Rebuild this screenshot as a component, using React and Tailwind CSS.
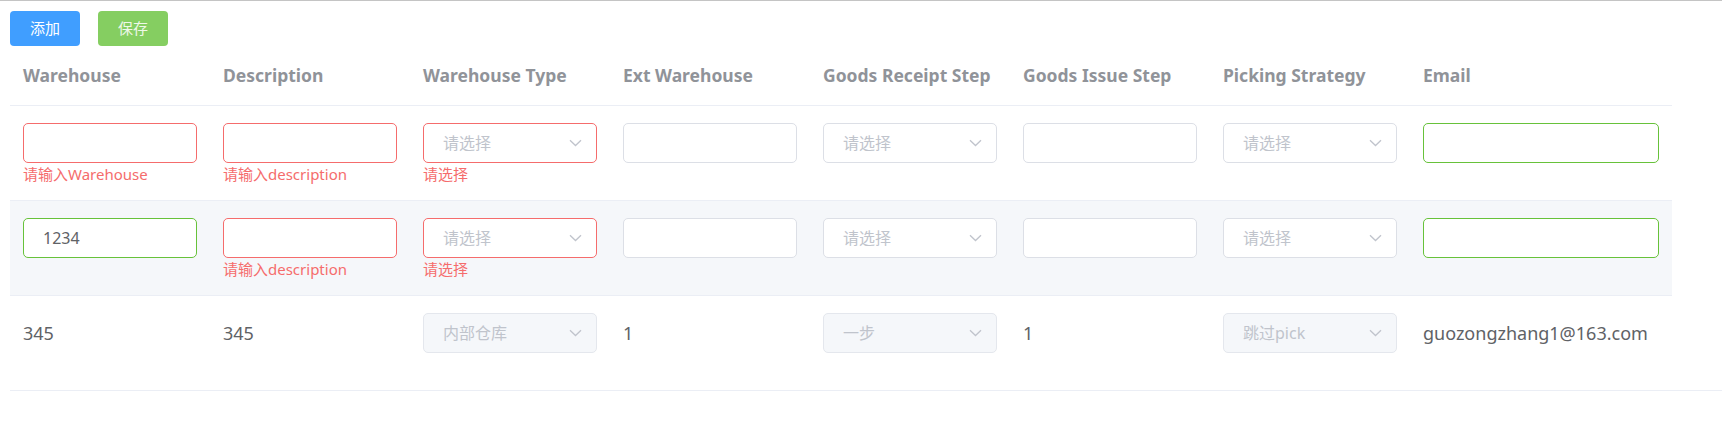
import React from 'react';

const columns = [
  'Warehouse',
  'Description',
  'Warehouse Type',
  'Ext Warehouse',
  'Goods Receipt Step',
  'Goods Issue Step',
  'Picking Strategy',
  'Email',
];

const gridCols = 'grid grid-cols-[200px_200px_200px_200px_200px_200px_200px_262px] w-[1662px]';

const borderByState = {
  error: 'border-[#f56c6c]',
  success: 'border-[#67c23a]',
  normal: 'border-[#dcdfe6]',
};

const Chevron = () => (
  <svg width="13" height="8" viewBox="0 0 13 8" fill="none" className="shrink-0">
    <path d="M1 1.2 L6.5 6.5 L12 1.2" stroke="#c0c4cc" strokeWidth="1.3" />
  </svg>
);

const TextInput = ({ state = 'normal', value }) => (
  <div
    className={`h-[40px] w-full rounded-[5px] border bg-white flex items-center px-[19px] text-[16px] text-[#606266] ${borderByState[state]}`}
  >
    {value}
  </div>
);

const SelectBox = ({ state = 'normal', value, disabled }) => (
  <div
    className={`h-[40px] w-full rounded-[5px] border flex items-center justify-between pl-[19px] pr-[14px] text-[16px] text-[#c0c4cc] ${
      disabled ? 'bg-[#f5f7fa] border-[#e4e7ed]' : `bg-white ${borderByState[state]}`
    }`}
  >
    <span>{value || '请选择'}</span>
    <Chevron />
  </div>
);

const Cell = ({ children, error }) => (
  <div className="px-[13px] pt-[17px]">
    {children}
    {error && <div className="pt-[4px] text-[15px] leading-none text-[#f56c6c]">{error}</div>}
  </div>
);

const EditRow = ({ first, striped }) => (
  <div className={`${gridCols} h-[95px] border-b border-[#ebeef5] ${striped ? 'bg-[#f5f7fa]' : 'bg-white'}`}>
    {first.warehouse}
    {first.description}
    {first.type}
    <Cell><TextInput /></Cell>
    <Cell><SelectBox /></Cell>
    <Cell><TextInput /></Cell>
    <Cell><SelectBox /></Cell>
    <Cell><TextInput state="success" /></Cell>
  </div>
);

const TextCell = ({ children }) => (
  <div className="px-[13px] pt-[17px]">
    <div className="h-[40px] flex items-center text-[18px] text-[#606266]">{children}</div>
  </div>
);

export default function App() {
  return (
    <div className="w-[1722px] h-[445px] bg-white border-t border-[#c4c4c4] font-['Noto_Sans','Noto_Sans_CJK_SC',sans-serif] overflow-hidden">
      {/* Toolbar */}
      <div className="flex gap-[18px] pl-[10px] pt-[10px]">
        <button className="w-[70px] h-[35px] rounded-[4px] bg-[#409eff] text-white text-[15px]">添加</button>
        <button className="w-[70px] h-[35px] rounded-[4px] bg-[#85ce61] text-[#eef8e8] text-[15px]">保存</button>
      </div>

      <div className="pl-[10px]">
        {/* Header */}
        <div className={`${gridCols} h-[60px] border-b border-[#ebeef5] items-center`}>
          {columns.map((c) => (
            <div key={c} className="px-[13px] text-[17.5px] font-bold text-[#909399] whitespace-nowrap">
              {c}
            </div>
          ))}
        </div>

        {/* Row 1 */}
        <EditRow
          first={{
            warehouse: <Cell error="请输入Warehouse"><TextInput state="error" /></Cell>,
            description: <Cell error="请输入description"><TextInput state="error" /></Cell>,
            type: <Cell error="请选择"><SelectBox state="error" /></Cell>,
          }}
        />

        {/* Row 2 */}
        <EditRow
          striped
          first={{
            warehouse: <Cell><TextInput state="success" value="1234" /></Cell>,
            description: <Cell error="请输入description"><TextInput state="error" /></Cell>,
            type: <Cell error="请选择"><SelectBox state="error" /></Cell>,
          }}
        />

        {/* Row 3 */}
        <div className="border-b border-[#ebeef5]">
          <div className={`${gridCols} h-[94px]`}>
            <TextCell>345</TextCell>
            <TextCell>345</TextCell>
            <Cell><SelectBox disabled value="内部仓库" /></Cell>
            <TextCell>1</TextCell>
            <Cell><SelectBox disabled value="一步" /></Cell>
            <TextCell>1</TextCell>
            <Cell><SelectBox disabled value="跳过pick" /></Cell>
            <TextCell>guozongzhang1@163.com</TextCell>
          </div>
        </div>
      </div>
    </div>
  );
}
